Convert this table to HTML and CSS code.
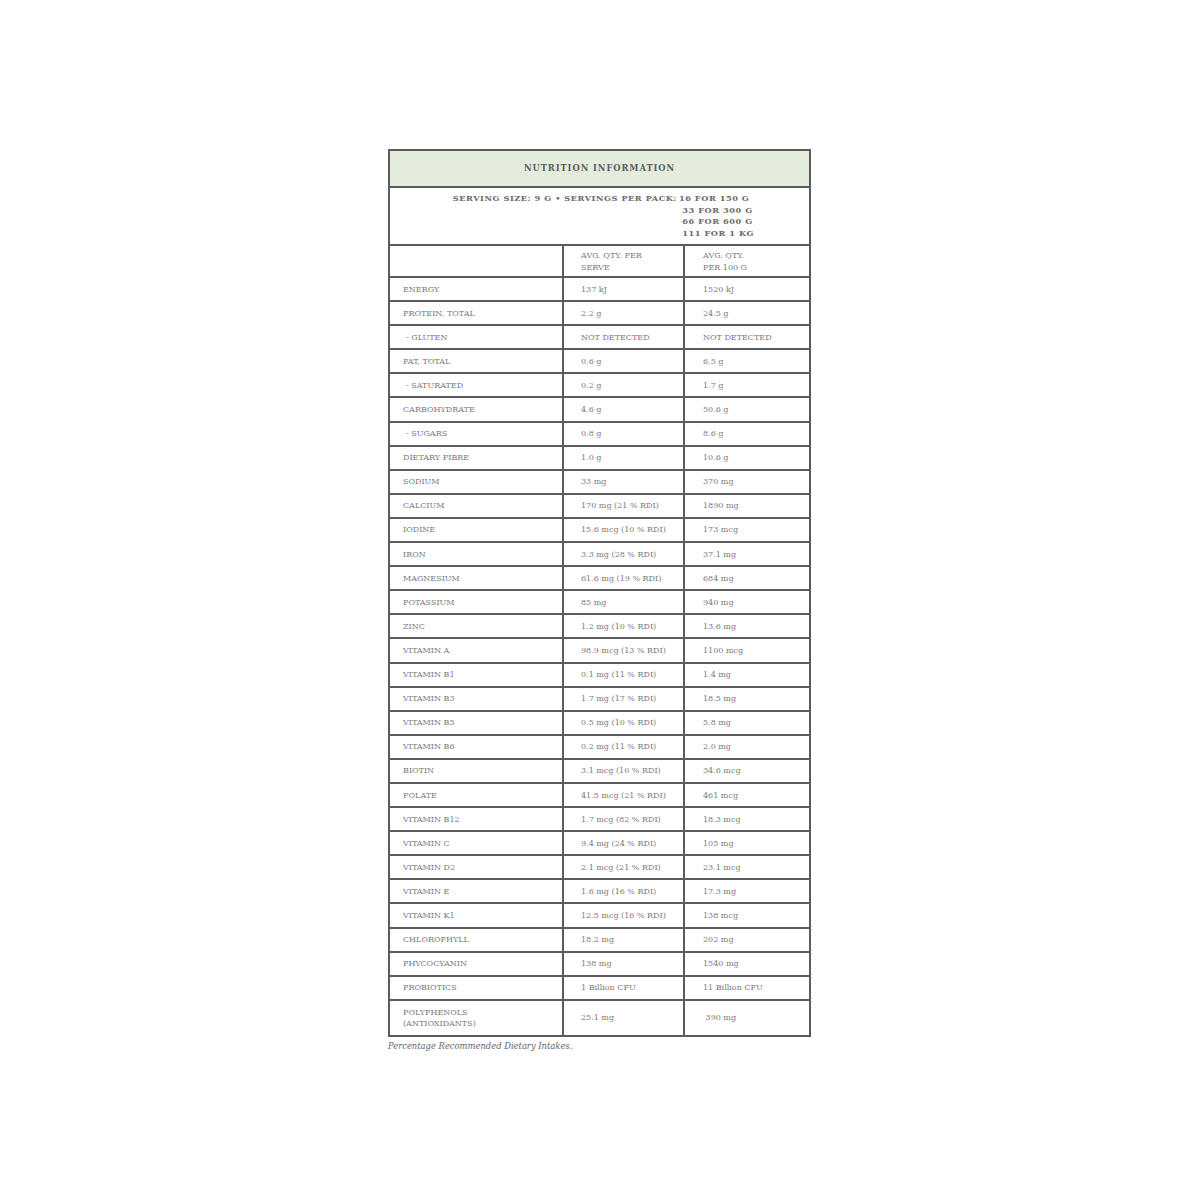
FILE: index.html
```html
<!DOCTYPE html>
<html>
<head>
<meta charset="utf-8">
<link rel="stylesheet" href="styles.css">
</head>
<body>
<div class="page">
  <div class="panel">
    <table class="nutri">
      <colgroup><col class="c1"><col class="c2"><col class="c3"></colgroup>
      <tr class="title"><td colspan="3">NUTRITION INFORMATION</td></tr>
      <tr class="serving"><td colspan="3">
        <div class="serve-line">
          <span class="serve-left">SERVING SIZE: 9 G &bull; SERVINGS PER PACK:</span>
          <span class="serve-right">16 FOR 150 G<br>&nbsp;33 FOR 300 G<br>&nbsp;66 FOR 600 G<br>&nbsp;111 FOR 1 KG</span>
        </div>
      </td></tr>
      <tr class="colhead"><td></td><td>AVG. QTY. PER<br>SERVE</td><td class="c3cell">AVG. QTY.<br>PER 100 G</td></tr>
      <tr><td>ENERGY</td><td>137 kJ</td><td>1520 kJ</td></tr>
      <tr><td>PROTEIN, TOTAL</td><td>2.2 g</td><td>24.5 g</td></tr>
      <tr><td class="sub">- GLUTEN</td><td>NOT DETECTED</td><td>NOT DETECTED</td></tr>
      <tr><td>FAT, TOTAL</td><td>0.6 g</td><td>6.5 g</td></tr>
      <tr><td class="sub">- SATURATED</td><td>0.2 g</td><td>1.7 g</td></tr>
      <tr><td>CARBOHYDRATE</td><td>4.6 g</td><td>50.6 g</td></tr>
      <tr><td class="sub">- SUGARS</td><td>0.8 g</td><td>8.6 g</td></tr>
      <tr><td>DIETARY FIBRE</td><td>1.0 g</td><td>10.6 g</td></tr>
      <tr><td>SODIUM</td><td>33 mg</td><td>370 mg</td></tr>
      <tr><td>CALCIUM</td><td>170 mg (21 % RDI)</td><td>1890 mg</td></tr>
      <tr><td>IODINE</td><td>15.6 mcg (10 % RDI)</td><td>173 mcg</td></tr>
      <tr><td>IRON</td><td>3.3 mg (28 % RDI)</td><td>37.1 mg</td></tr>
      <tr><td>MAGNESIUM</td><td>61.6 mg (19 % RDI)</td><td>684 mg</td></tr>
      <tr><td>POTASSIUM</td><td>85 mg</td><td>940 mg</td></tr>
      <tr><td>ZINC</td><td>1.2 mg (10 % RDI)</td><td>13.6 mg</td></tr>
      <tr><td>VITAMIN A</td><td>98.9 mcg (13 % RDI)</td><td>1100 mcg</td></tr>
      <tr><td>VITAMIN B1</td><td>0.1 mg (11 % RDI)</td><td>1.4 mg</td></tr>
      <tr><td>VITAMIN B3</td><td>1.7 mg (17 % RDI)</td><td>18.5 mg</td></tr>
      <tr><td>VITAMIN B5</td><td>0.5 mg (10 % RDI)</td><td>5.8 mg</td></tr>
      <tr><td>VITAMIN B6</td><td>0.2 mg (11 % RDI)</td><td>2.0 mg</td></tr>
      <tr><td>BIOTIN</td><td>3.1 mcg (10 % RDI)</td><td>34.6 mcg</td></tr>
      <tr><td>FOLATE</td><td>41.5 mcg (21 % RDI)</td><td>461 mcg</td></tr>
      <tr><td>VITAMIN B12</td><td>1.7 mcg (82 % RDI)</td><td>18.3 mcg</td></tr>
      <tr><td>VITAMIN C</td><td>9.4 mg (24 % RDI)</td><td>105 mg</td></tr>
      <tr><td>VITAMIN D2</td><td>2.1 mcg (21 % RDI)</td><td>23.1 mcg</td></tr>
      <tr><td>VITAMIN E</td><td>1.6 mg (16 % RDI)</td><td>17.3 mg</td></tr>
      <tr><td>VITAMIN K1</td><td>12.5 mcg (16 % RDI)</td><td>138 mcg</td></tr>
      <tr><td>CHLOROPHYLL</td><td>18.2 mg</td><td>202 mg</td></tr>
      <tr><td>PHYCOCYANIN</td><td>138 mg</td><td>1540 mg</td></tr>
      <tr><td>PROBIOTICS</td><td>1 Billion CFU</td><td>11 Billion CFU</td></tr>
      <tr class="tall"><td>POLYPHENOLS<br>(ANTIOXIDANTS)</td><td>25.1 mg</td><td>&nbsp;390 mg</td></tr>
    </table>
    <p class="note">Percentage Recommended Dietary Intakes.</p>
  </div>
</div>
</body>
</html>
```

FILE: styles.css
```css
html, body {
  margin: 0;
  padding: 0;
  background: #ffffff;
}

.page {
  padding-top: 149px;
  padding-left: 388px;
}

.panel {
  width: 424px;
}

.nutri {
  width: 421px;
  border-collapse: collapse;
  table-layout: fixed;
  font-family: "DejaVu Serif", "Liberation Serif", serif;
  font-size: 8px;
  color: #7a7a7a;
}

.c1 { width: 174px; }
.c2 { width: 121px; }
.c3 { width: 126px; }

.nutri td {
  border: 2px solid #5c5c5c;
  height: 22.1px;
  padding: 0 0 0 17px;
  vertical-align: middle;
  line-height: 11px;
  white-space: nowrap;
}

.nutri td:first-child {
  padding-left: 13px;
}

.nutri td:last-child {
  padding-left: 18px;
}

.nutri td.sub {
  padding-left: 16px;
}

.nutri tr.title td {
  height: 35px;
  background: #e4eddd;
  text-align: center;
  padding: 0;
  font-weight: bold;
  font-size: 8.4px;
  letter-spacing: 0.9px;
  color: #5e5e5e;
}

.nutri tr.serving td {
  height: 56px;
  padding: 0;
  vertical-align: top;
}

.serve-line {
  display: flex;
  justify-content: center;
  padding-top: 5px;
  padding-left: 8px;
  font-weight: bold;
  font-size: 8.2px;
  letter-spacing: 0.55px;
  line-height: 11.7px;
  color: #6a6a6a;
}

.serve-left {
  margin-right: 2px;
}

.nutri tr.colhead td {
  height: 26px;
  vertical-align: top;
  padding-top: 4px;
  line-height: 12px;
}

.nutri tr.colhead td:first-child {
  padding: 0;
}

.nutri tr.tall td {
  height: 34px;
}

.note {
  margin: 4px 0 0 0;
  font-family: "DejaVu Serif", "Liberation Serif", serif;
  font-style: italic;
  font-size: 8.4px;
  color: #666666;
}
```
